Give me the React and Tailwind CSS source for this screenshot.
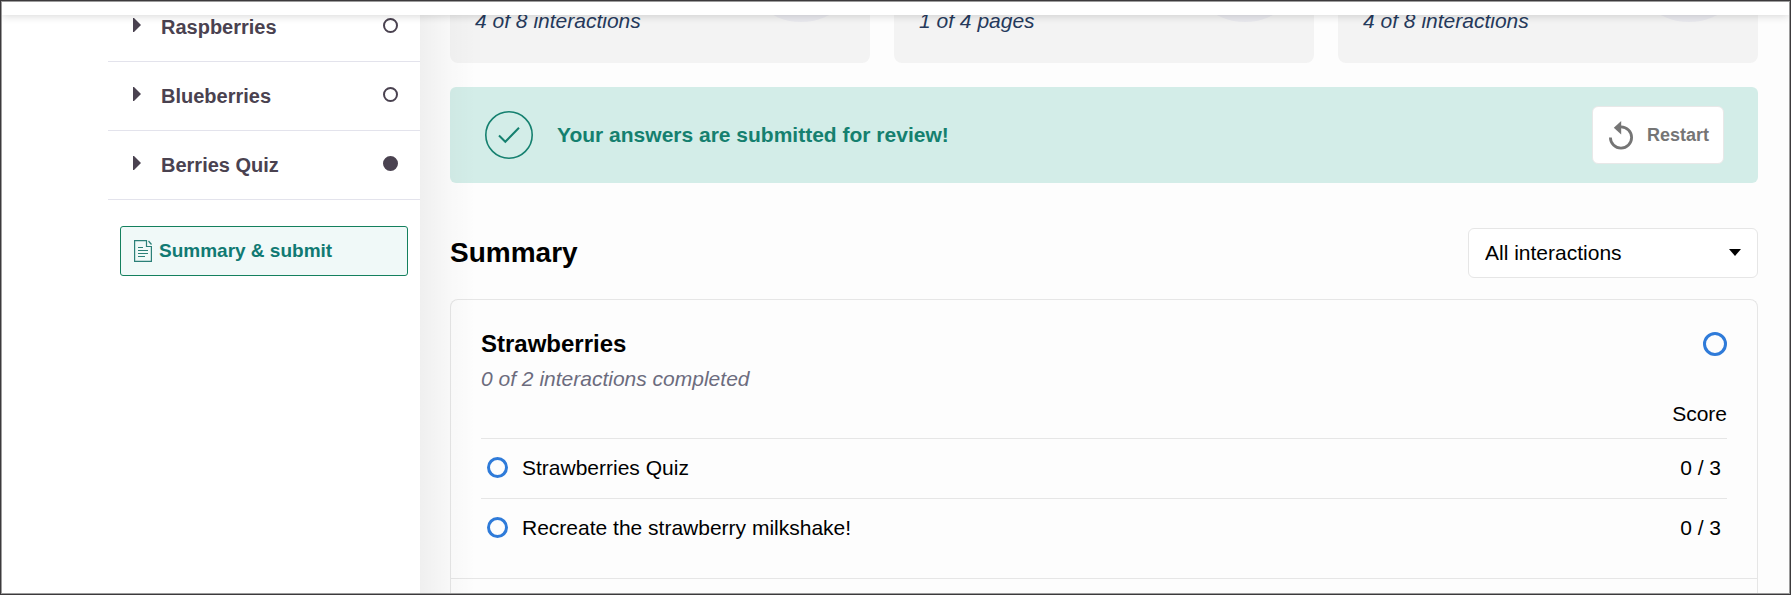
import clsx from "clsx";

const CHAPTERS = [
  { title: "Raspberries", done: false },
  { title: "Blueberries", done: false },
  { title: "Berries Quiz", done: true },
];

const STATS = [
  { id: "progress", text: "4 of 8 interactions" },
  { id: "pages", text: "1 of 4 pages" },
  { id: "score", text: "4 of 8 interactions" },
];

const TASKS = [
  { title: "Strawberries Quiz", score: "0 / 3" },
  { title: "Recreate the strawberry milkshake!", score: "0 / 3" },
];

const DocumentIcon = () => (
  <svg width="18" height="22" viewBox="0 0 18 22" fill="none" stroke="#2b8078" strokeWidth="1.2" aria-hidden="true">
    <path d="M12.5 .6H.6v20.8h16.8V6.5H12.5z" />
    <path d="M14.5 1l3 3.5" />
    <path d="M4 7.5h5M4 10.5h10M4 13.5h10M4 16.5h7" />
  </svg>
);

const RestartIcon = () => (
  <svg width="24" height="30" viewBox="0 0 24 30" fill="none" aria-hidden="true">
    <path d="M1.4 17.5A10.6 10.6 0 1 0 12 6.9" stroke="#757575" strokeWidth="2.8" />
    <path d="M12.2 1v13.4L4.8 7.7z" fill="#757575" />
  </svg>
);

const CheckIcon = () => (
  <svg width="48" height="48" viewBox="0 0 48 48" fill="none" stroke="#15806f" aria-hidden="true">
    <circle cx="24" cy="24" r="23.2" strokeWidth="1.6" />
    <path d="M14 24.5l6.3 6.3L34 16.8" strokeWidth="2" />
  </svg>
);

const Sidebar = () => (
  <aside className="w-[418px] shrink-0 bg-white pl-[106px]">
    <nav className="-mt-[22px]">
      <ul>
        {CHAPTERS.map(({ title, done }) => (
          <li key={title} className="border-b border-[#e3e3ec]">
            <button
              type="button"
              className="flex h-[68px] w-full items-center pl-[25px] pr-[22px] text-[20px] font-bold text-[#4a4250]"
            >
              <svg width="8" height="14" viewBox="0 0 8 14" className="mb-1 mr-5" aria-hidden="true">
                <path d="M0 0h1L8 7L1 14H0z" fill="#4a4250" />
              </svg>
              {title}
              <span
                className={clsx(
                  "mb-[3px] ml-auto size-[15px] rounded-full border-2 border-[#4a4250]",
                  done && "bg-[#4a4250]"
                )}
              />
            </button>
          </li>
        ))}
      </ul>
      <a
        href="#summary"
        className="mx-3 mt-[26px] flex h-[50px] items-center gap-[7px] rounded-[3px] border border-[#14805e] bg-[#f0f9f8] px-[13px] text-[19px] font-bold text-[#107a73]"
      >
        <DocumentIcon />
        Summary & submit
      </a>
    </nav>
  </aside>
);

const StatCard = ({ text }) => (
  <div className="flex h-[120px] flex-1 items-end justify-between rounded-lg bg-[#f3f3f3] px-[25px] pb-[27px] text-[21px] italic text-[#263a5c]">
    {text}
    <div className="mb-3.5 mr-[-16px] size-[120px] rounded-full bg-[#e9e9ee]" />
  </div>
);

const SummaryCard = () => (
  <section className="mt-[21px] rounded-t-lg border border-b-0 border-[#e6e6e6]">
    <div className="px-[30px] pb-5 pt-7">
      <div className="flex items-center justify-between">
        <h3 className="text-[24px] font-bold leading-8">Strawberries</h3>
        <span className="size-6 rounded-full border-3 border-[#2f7bd9]" />
      </div>
      <p className="mt-[3px] text-[21px] italic leading-8 text-[#6c6c7e]">0 of 2 interactions completed</p>
      <table className="w-full text-[21px]">
        <thead>
          <tr>
            <th aria-label="Interaction" />
            <th scope="col" className="h-[43px] pb-2 text-right align-bottom font-normal leading-8">
              Score
            </th>
          </tr>
        </thead>
        <tbody>
          {TASKS.map(({ title, score }) => (
            <tr key={title} className="h-[60px] border-t border-[#e6e6e6]">
              <td className="pb-px pl-1.5">
                <div className="flex items-center gap-3.5">
                  <span className="size-[21px] rounded-full border-3 border-[#2f7bd9]" />
                  {title}
                </div>
              </td>
              <td className="pb-px pr-1.5 text-right">{score}</td>
            </tr>
          ))}
        </tbody>
      </table>
    </div>
    <div className="h-10 border-t border-[#e6e6e6]" />
  </section>
);

export default function App() {
  return (
    <div className="h-screen border border-[#3c3a3c] font-['Liberation_Sans',Arial,sans-serif] text-black">
      <div className="flex h-full flex-col overflow-hidden border border-[#9c9c9c]">
        <header className="z-10 h-[13px] shrink-0 bg-white shadow-[0_1px_8px_rgba(0,0,0,0.16)]" />
        <div className="flex min-h-0 flex-1">
          <Sidebar />
          <main className="relative min-w-0 flex-1 bg-[#fdfdfd] pl-[30px] pr-[31px]">
            <div className="-mt-[72px] flex gap-6">
              {STATS.map(({ id, text }) => (
                <StatCard key={id} text={text} />
              ))}
            </div>

            <div className="mt-6 flex h-24 items-center rounded-md bg-[#d3ede8] pl-[35px] pr-[34px]">
              <CheckIcon />
              <p className="ml-6 text-[21px] font-bold text-[#15806f]">Your answers are submitted for review!</p>
              <button
                type="button"
                className="ml-auto flex h-[58px] items-center gap-3.5 rounded-md border border-[#e8e8e8] bg-white pl-4 pr-3.5 text-[18px] font-bold text-[#757575]"
              >
                <RestartIcon />
                Restart
              </button>
            </div>

            <div className="mt-[45px] flex items-center justify-between" id="summary">
              <h2 className="text-[28px] font-bold">Summary</h2>
              <div className="relative">
                <select
                  aria-label="Filter interactions"
                  className="h-[50px] w-[290px] appearance-none rounded-md border border-[#e6e6e6] bg-white pl-4 text-[21px]"
                >
                  <option>All interactions</option>
                </select>
                <svg
                  width="12"
                  height="7"
                  viewBox="0 0 12 7"
                  className="pointer-events-none absolute right-[17px] top-[21px]"
                  aria-hidden="true"
                >
                  <path d="M0 0h12L6 7z" />
                </svg>
              </div>
            </div>

            <SummaryCard />

            {/* shade cast by the sidebar */}
            <div className="pointer-events-none absolute inset-y-0 left-0 w-14 bg-[linear-gradient(to_right,rgba(0,0,0,0.055),rgba(0,0,0,0.018)_30px,transparent)]" />
          </main>
        </div>
      </div>
    </div>
  );
}
